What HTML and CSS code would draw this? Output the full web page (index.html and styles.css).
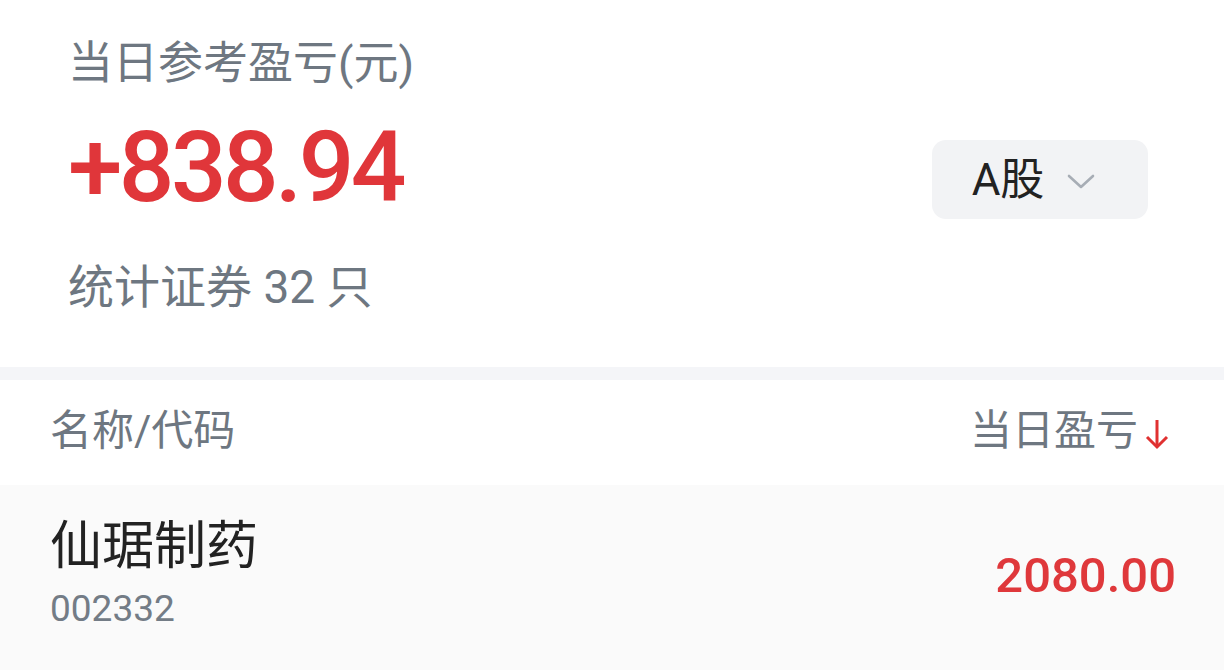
FILE: index.html
```html
<!DOCTYPE html>
<html lang="zh">
<head>
<meta charset="utf-8">
<link rel="stylesheet" href="styles.css">
</head>
<body>
<div class="summary">
  <div class="summary-left">
    <div class="summary-title">当日参考盈亏(元)</div>
    <div class="summary-value">+838.94</div>
    <div class="summary-count">统计证券 32 只</div>
  </div>
  <div class="market-select">
    <span class="market-label">A股</span>
    <svg class="chev" width="30" height="18" viewBox="0 0 30 18"><polyline points="3,4 15,15 27,4" fill="none" stroke="#a7adb5" stroke-width="2.6" stroke-linecap="round" stroke-linejoin="round"/></svg>
  </div>
</div>
<div class="band"></div>
<div class="table-head">
  <span class="th-name">名称/代码</span>
  <span class="th-pl">当日盈亏<svg class="arrow" width="26" height="36" viewBox="0 0 26 36"><line x1="13" y1="4" x2="13" y2="31" stroke="#e03131" stroke-width="3"/><polyline points="3,21 13,31 23,21" fill="none" stroke="#e03131" stroke-width="3"/></svg></span>
</div>
<div class="row">
  <div class="row-left">
    <div class="stock-name">仙琚制药</div>
    <div class="stock-code">002332</div>
  </div>
  <div class="row-value">2080.00</div>
</div>
</body>
</html>
```

FILE: styles.css
```css
* { box-sizing: border-box; }
html, body { margin: 0; padding: 0; }
body {
  width: 1224px;
  height: 670px;
  overflow: hidden;
  background: #ffffff;
  font-family: Roboto, "Noto Sans CJK SC", sans-serif;
}
.summary {
  height: 367px;
  display: flex;
  justify-content: space-between;
  align-items: flex-start;
  padding: 0 76px 0 68px;
}
.summary-left {
  display: flex;
  flex-direction: column;
}
.summary-title {
  margin-top: 39px;
  font-size: 45px;
  line-height: 50px;
  color: #6e7781;
}
.summary-value {
  margin-top: 29px;
  font-size: 98px;
  line-height: 100px;
  font-weight: 500;
  color: #e0363a;
  letter-spacing: -3.6px;
}
.summary-count {
  margin-top: 44px;
  font-size: 46px;
  line-height: 50px;
  color: #6e7781;
}
.market-select {
  margin-top: 140px;
  width: 216px;
  height: 79px;
  background: #f2f3f5;
  border-radius: 14px;
  display: flex;
  align-items: center;
  justify-content: center;
  gap: 22px;
  padding-right: 12px;
}
.market-label {
  font-size: 44px;
  line-height: 50px;
  color: #222222;
}
.chev { margin-top: 2px; }
.band {
  height: 13px;
  background: #f4f5f8;
}
.table-head {
  height: 105px;
  display: flex;
  justify-content: space-between;
  align-items: center;
  padding: 0 54px 0 50px;
  font-size: 42px;
  line-height: 50px;
  color: #6e7781;
}
.th-name { margin-top: -4px; }
.th-pl {
  display: flex;
  align-items: center;
  margin-top: -4px;
}
.arrow { margin-left: 6px; margin-top: 6px; }
.row {
  height: 185px;
  background: #fafafa;
  display: flex;
  justify-content: space-between;
  align-items: flex-start;
  padding: 0 48px 0 50px;
}
.row-left {
  display: flex;
  flex-direction: column;
  padding-top: 31px;
}
.stock-name {
  font-size: 52px;
  line-height: 62px;
  color: #222222;
}
.stock-code {
  margin-top: 9px;
  font-size: 37px;
  line-height: 44px;
  color: #737c86;
}
.row-value {
  align-self: center;
  font-size: 49px;
  line-height: 60px;
  font-weight: 500;
  color: #df383b;
  margin-top: -4px;
}
```
